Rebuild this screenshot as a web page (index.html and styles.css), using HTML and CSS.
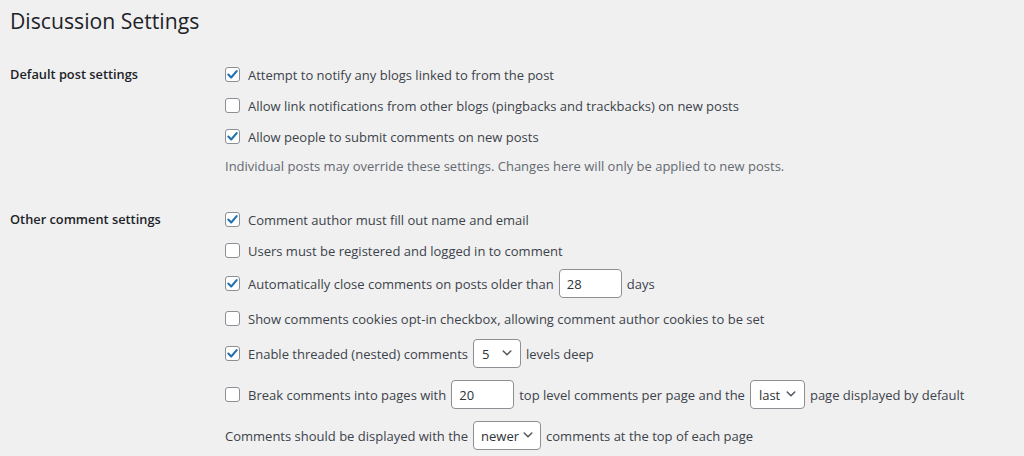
FILE: index.html
```html
<!DOCTYPE html>
<html lang="en">
<head>
<meta charset="utf-8">
<title>Discussion Settings</title>
<link rel="stylesheet" href="styles.css">
</head>
<body>
<div class="wrap">
  <h1 class="title">Discussion Settings</h1>

  <section class="group">
    <div class="group-label">Default post settings</div>
    <div class="group-body">
      <div class="row">
        <span class="cb checked"><svg viewBox="0 0 15 15" width="15" height="15"><polyline points="3.3,7.6 6.2,10.5 11.7,4.1"/></svg></span>
        <span class="txt">Attempt to notify any blogs linked to from the post</span>
      </div>
      <div class="row">
        <span class="cb"></span>
        <span class="txt">Allow link notifications from other blogs (pingbacks and trackbacks) on new posts</span>
      </div>
      <div class="row">
        <span class="cb checked"><svg viewBox="0 0 15 15" width="15" height="15"><polyline points="3.3,7.6 6.2,10.5 11.7,4.1"/></svg></span>
        <span class="txt">Allow people to submit comments on new posts</span>
      </div>
      <p class="note">Individual posts may override these settings. Changes here will only be applied to new posts.</p>
    </div>
  </section>

  <section class="group group-second">
    <div class="group-label">Other comment settings</div>
    <div class="group-body">
      <div class="row">
        <span class="cb checked"><svg viewBox="0 0 15 15" width="15" height="15"><polyline points="3.3,7.6 6.2,10.5 11.7,4.1"/></svg></span>
        <span class="txt">Comment author must fill out name and email</span>
      </div>
      <div class="row">
        <span class="cb"></span>
        <span class="txt">Users must be registered and logged in to comment</span>
      </div>
      <div class="row row-md">
        <span class="cb checked"><svg viewBox="0 0 15 15" width="15" height="15"><polyline points="3.3,7.6 6.2,10.5 11.7,4.1"/></svg></span>
        <span class="txt">Automatically close comments on posts older than</span>
        <span class="field">28</span>
        <span class="txt">days</span>
      </div>
      <div class="row row-md">
        <span class="cb"></span>
        <span class="txt">Show comments cookies opt-in checkbox, allowing comment author cookies to be set</span>
      </div>
      <div class="row row-md">
        <span class="cb checked"><svg viewBox="0 0 15 15" width="15" height="15"><polyline points="3.3,7.6 6.2,10.5 11.7,4.1"/></svg></span>
        <span class="txt">Enable threaded (nested) comments</span>
        <span class="select select-num"><span>5</span><svg class="chev" viewBox="0 0 10 6" width="10" height="6"><polyline points="1.2,1 5,4.8 8.8,1"/></svg></span>
        <span class="txt">levels deep</span>
      </div>
      <div class="row row-lg">
        <span class="cb"></span>
        <span class="txt">Break comments into pages with</span>
        <span class="field">20</span>
        <span class="txt">top level comments per page and the</span>
        <span class="select select-last"><span>last</span><svg class="chev" viewBox="0 0 10 6" width="10" height="6"><polyline points="1.2,1 5,4.8 8.8,1"/></svg></span>
        <span class="txt">page displayed by default</span>
      </div>
      <div class="row row-md row-plain">
        <span class="txt">Comments should be displayed with the</span>
        <span class="select select-order"><span>newer</span><svg class="chev" viewBox="0 0 10 6" width="10" height="6"><polyline points="1.2,1 5,4.8 8.8,1"/></svg></span>
        <span class="txt">comments at the top of each page</span>
      </div>
    </div>
  </section>
</div>
</body>
</html>
```
FILE: styles.css
```css
html, body {
  margin: 0;
  padding: 0;
  background: #f0f0f1;
}

body {
  font-family: "Open Sans", "Segoe UI", sans-serif;
  font-size: 13px;
  color: #3c434a;
}

.wrap {
  padding: 6px 10px 0 10px;
}

.title {
  margin: 0;
  font-size: 21.2px;
  font-weight: 400;
  line-height: 30px;
  color: #1d2327;
}

.group {
  display: grid;
  grid-template-columns: 215px 1fr;
  margin-top: 22.5px;
}

.group-second {
  margin-top: 25px;
}

.group-label {
  height: 31px;
  line-height: 31px;
  font-size: 12.8px;
  font-weight: 600;
  color: #1d2327;
}

.group-body {
  display: flex;
  flex-direction: column;
}

.row {
  display: flex;
  align-items: center;
  height: 31px;
  white-space: nowrap;
}

.row-md {
  height: 35px;
}

.row-lg {
  height: 47px;
}

.cb {
  box-sizing: border-box;
  width: 15px;
  height: 15px;
  margin-right: 8px;
  border: 1px solid #8c8f94;
  border-radius: 3px;
  background: #fff;
  display: flex;
  align-items: center;
  justify-content: center;
  flex: none;
}

.cb svg {
  display: block;
  margin: -1px;
  fill: none;
  stroke: #2271b1;
  stroke-width: 2.1;
  stroke-linecap: round;
  stroke-linejoin: round;
}

.txt {
  position: relative;
  top: 1px;
}

.field,
.select {
  box-sizing: border-box;
  height: 29px;
  margin: 0 5px;
  border: 1px solid #8c8f94;
  border-radius: 4px;
  background: #fff;
  color: #2c3338;
  display: flex;
  align-items: center;
  flex: none;
}

.field {
  width: 63px;
  padding: 1px 7px 0;
}

.select {
  padding: 1px 8px 0 8px;
  justify-content: space-between;
}

.select-num {
  width: 48px;
}

.select-last {
  width: 55px;
}

.select-order {
  width: 68px;
  padding-left: 7px;
  padding-right: 7px;
}

.chev {
  display: block;
  fill: none;
  stroke: #50575e;
  stroke-width: 1.5;
  stroke-linecap: round;
  stroke-linejoin: round;
  margin-top: -1px;
}

.note {
  margin: 0;
  height: 27px;
  line-height: 29px;
  color: #646970;
}
```
